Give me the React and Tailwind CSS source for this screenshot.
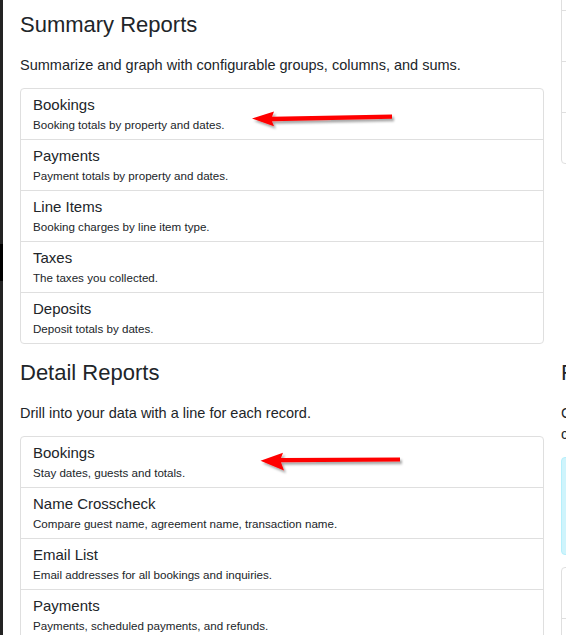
import React from "react";

const summaryItems = [
  { title: "Bookings", desc: "Booking totals by property and dates." },
  { title: "Payments", desc: "Payment totals by property and dates." },
  { title: "Line Items", desc: "Booking charges by line item type." },
  { title: "Taxes", desc: "The taxes you collected." },
  { title: "Deposits", desc: "Deposit totals by dates." },
];

const detailItems = [
  { title: "Bookings", desc: "Stay dates, guests and totals." },
  { title: "Name Crosscheck", desc: "Compare guest name, agreement name, transaction name." },
  { title: "Email List", desc: "Email addresses for all bookings and inquiries." },
  { title: "Payments", desc: "Payments, scheduled payments, and refunds." },
];

const sideItems = [
  { title: "Occupancy", desc: "Nights booked by property." },
  { title: "Revenue", desc: "Revenue by month." },
  { title: "Owners", desc: "Owner statements." },
  { title: "Channels", desc: "Bookings by channel." },
];

const ReportList = ({ items }) => {
  return (
    <div className="rounded border border-[#dfdfdf] bg-white divide-y divide-[#dfdfdf]">
      {items.map((item) => (
        <div key={item.title} className="px-3 py-[5px]">
          <div className="text-[15px] leading-[22px]">{item.title}</div>
          <div className="text-[11.6px] leading-[18px]">{item.desc}</div>
        </div>
      ))}
    </div>
  );
};

const Section = ({ title, subtitle, items, className }) => {
  return (
    <div className={className}>
      <h3 className="text-[22px] leading-[26px] font-normal mb-[17px]">{title}</h3>
      <p className="text-[14.5px] leading-[21px] mb-3">{subtitle}</p>
      <ReportList items={items} />
    </div>
  );
};

const Arrows = () => {
  return (
    <svg
      className="absolute left-0 top-0 pointer-events-none"
      width="566"
      height="635"
      viewBox="0 0 566 635"
    >
      <defs>
        <filter id="shadow" x="-10%" y="-50%" width="120%" height="200%">
          <feDropShadow dx="2" dy="2.5" stdDeviation="1.2" floodColor="#000" floodOpacity="0.35" />
        </filter>
      </defs>
      <polygon
        filter="url(#shadow)"
        fill="#ff0000"
        points="252,118.5 274,111.5 272,116.8 392,114.4 392,118.8 272,121.2 274,126.3"
      />
      <polygon
        filter="url(#shadow)"
        fill="#ff0000"
        points="260.5,460.7 283,452.7 281,458 400,457.6 400,461.4 281,462.2 284,470.5"
      />
    </svg>
  );
};

const App = () => {
  return (
    <div className="relative flex h-[635px] w-[566px] overflow-hidden bg-white text-[#212529] font-['Liberation_Sans',Arial,sans-serif]">
      <div className="flex w-[3px] shrink-0 flex-col bg-[#232323]">
        <div className="h-[244px] shrink-0" />
        <div className="h-[37px] shrink-0 bg-black" />
      </div>

      <div className="grid shrink-0 grid-cols-[524px_300px] gap-x-[17px] pl-[17px] pt-3 content-start">
        <Section
          className="mb-4"
          title="Summary Reports"
          subtitle="Summarize and graph with configurable groups, columns, and sums."
          items={summaryItems}
        />
        <div className="-mt-[53px]">
          <ReportList items={sideItems} />
        </div>

        <Section
          title="Detail Reports"
          subtitle="Drill into your data with a line for each record."
          items={detailItems}
        />
        <div>
          <h3 className="text-[22px] leading-[26px] font-normal mb-[17px] whitespace-nowrap">
            Financial Reports
          </h3>
          <p className="text-[14.5px] leading-[21px] mb-3 whitespace-nowrap">
            Custom reports for your account,
            <br />
            configured by our team.
          </p>
          <div className="mb-3 h-[98px] rounded border border-[#b6effb] bg-[#cff4fc] px-4 py-3 text-[14.5px] leading-[21px] text-[#055160]">
            Ask us about a report you need.
          </div>
          <ReportList items={sideItems} />
        </div>
      </div>

      <Arrows />
    </div>
  );
};

export default App;
